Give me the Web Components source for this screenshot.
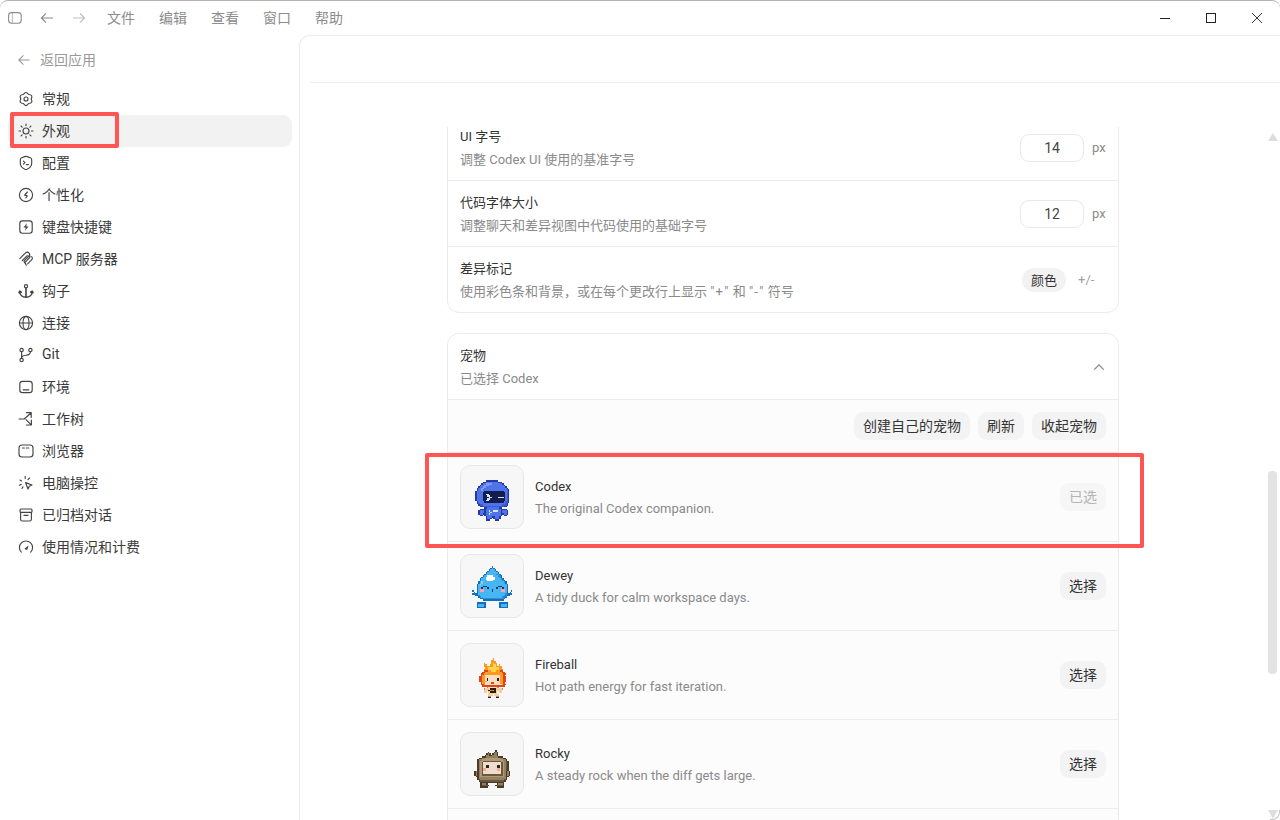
<!DOCTYPE html>
<html lang="zh-CN">
<head>
<meta charset="utf-8">
<title>设置</title>
<style>
  html, body { margin: 0; height: 100%; background: #fff; overflow: hidden; }
  body { font-family: Roboto, "Noto Sans CJK SC", sans-serif; }
  .q { letter-spacing: 1.2px; }
</style>
</head>
<body>
<app-window>
  <title-bar slot="top"></title-bar>
  <side-nav slot="side">
    <nav-item icon="gear">常规</nav-item>
    <nav-item icon="sun" active>外观</nav-item>
    <nav-item icon="shield">配置</nav-item>
    <nav-item icon="persona">个性化</nav-item>
    <nav-item icon="keys">键盘快捷键</nav-item>
    <nav-item icon="mcp">MCP 服务器</nav-item>
    <nav-item icon="hook">钩子</nav-item>
    <nav-item icon="globe">连接</nav-item>
    <nav-item icon="git">Git</nav-item>
    <nav-item icon="env">环境</nav-item>
    <nav-item icon="tree">工作树</nav-item>
    <nav-item icon="browser">浏览器</nav-item>
    <nav-item icon="cursor">电脑操控</nav-item>
    <nav-item icon="archive">已归档对话</nav-item>
    <nav-item icon="gauge">使用情况和计费</nav-item>
  </side-nav>
  <settings-pane slot="main">
    <settings-card class="clipped">
      <setting-row>
        <span slot="title">UI 字号</span>
        <span slot="desc">调整 Codex UI 使用的基准字号</span>
        <num-input slot="control" value="14"></num-input>
      </setting-row>
      <setting-row>
        <span slot="title">代码字体大小</span>
        <span slot="desc">调整聊天和差异视图中代码使用的基础字号</span>
        <num-input slot="control" value="12"></num-input>
      </setting-row>
      <setting-row last>
        <span slot="title">差异标记</span>
        <span slot="desc">使用彩色条和背景，或在每个更改行上显示 <span class="q">"+"</span> 和 <span class="q">"-"</span> 符号</span>
        <diff-toggle slot="control"></diff-toggle>
      </setting-row>
    </settings-card>
    <settings-card class="pets">
      <setting-row>
        <span slot="title">宠物</span>
        <span slot="desc">已选择 Codex</span>
        <svg slot="control" width="12" height="8" viewBox="0 0 12 8" style="display:block;margin-right:1px"><path d="M1.2 6.6 6 1.8l4.8 4.8" fill="none" stroke="#8a8a8a" stroke-width="1.3"/></svg>
      </setting-row>
      <pet-toolbar>
        <pill-button>创建自己的宠物</pill-button>
        <pill-button>刷新</pill-button>
        <pill-button>收起宠物</pill-button>
      </pet-toolbar>
      <pet-row pet="codex" name="Codex" desc="The original Codex companion." selected></pet-row>
      <pet-row pet="dewey" name="Dewey" desc="A tidy duck for calm workspace days."></pet-row>
      <pet-row pet="fireball" name="Fireball" desc="Hot path energy for fast iteration."></pet-row>
      <pet-row pet="rocky" name="Rocky" desc="A steady rock when the diff gets large."></pet-row>
      <div style="height:60px;background:#fcfcfc"></div>
    </settings-card>
  </settings-pane>
  <mark-box slot="over" style="left:10px;top:112px;width:109px;height:36px"></mark-box>
  <mark-box slot="over" style="left:425px;top:453px;width:719px;height:95px"></mark-box>
</app-window>

<script>
const ICONS = {
  gear: '<path d="M5.4 3.5Q8-.6 10.6 3.5Q15.45 3.7 13.2 8Q15.45 12.3 10.6 12.5Q8 16.6 5.4 12.5Q.55 12.3 2.8 8Q.55 3.7 5.4 3.5Z"/><circle cx="8" cy="8" r="2"/>',
  sun: '<circle cx="8" cy="8" r="3"/><path d="M8 1v1.6M8 13.4V15M1 8h1.6M13.4 8H15M3.05 3.05l1.1 1.1M11.85 11.85l1.1 1.1M3.05 12.95l1.1-1.1M11.85 4.15l1.1-1.1"/>',
  shield: '<path d="M6.7 1.6c.8-.3 1.8-.3 2.6 0l3 1.1c.8.3 1.4 1.1 1.4 2v3.4c0 2.9-2.3 5.3-4.7 6.2-.6.2-1.4.2-2 0-2.4-.9-4.7-3.3-4.7-6.2V4.7c0-.9.6-1.7 1.4-2z"/><path d="M5.4 6.2 7 7.7 5.4 9.2M8.4 9.6h2"/>',
  persona: '<circle cx="8" cy="8" r="6.6"/><path d="M9.4 5 6.8 8c-.2.3 0 .5.3.5h1.8c.3 0 .5.3.3.6l-1.4 1.7"/>',
  keys: '<rect x="1.8" y="1.8" width="12.4" height="12.4" rx="2.6"/><path d="M9 4.2 5.4 8.6h2.4l-.8 3.2 3.6-4.4H8.2z" fill="currentColor" stroke="none"/>',
  mcp: '<path d="M1.8 7.6 7.6 1.8c1-1 2.4-1 3.3 0 .9.9.9 2.3 0 3.2L6.4 9.6M4.2 9.6l5-5M6.4 9.6c-.5.6-.5 1.1 0 1.6l1 1 .9 2M13.6 5.6c1 .9 1 2.3 0 3.2l-4 4M11.2 4.2c.9.9.9 2.1 0 3L6.6 11.8"/>',
  hook: '<circle cx="8" cy="3.2" r="1.6"/><path d="M8 4.8v9.4M1.8 8.4c0 3.6 2.8 5.8 6.2 5.8s6.2-2.2 6.2-5.8M1 9.6l.8-1.4 1.4 1M15 9.6l-.8-1.4-1.4 1" stroke-width="1.6"/>',
  globe: '<circle cx="8" cy="8" r="6.6"/><ellipse cx="8" cy="8" rx="3" ry="6.6"/><path d="M1.4 8h13.2"/>',
  git: '<circle cx="3.6" cy="3" r="1.7"/><circle cx="12.4" cy="3" r="1.7"/><circle cx="3.6" cy="13" r="1.7"/><path d="M3.6 4.7v6.6M12.4 4.7c0 2.8-2.3 3.3-4.4 3.5-2.2.2-4.4.6-4.4 3"/>',
  env: '<rect x="1.8" y="2.4" width="12.4" height="11.2" rx="2.6"/><path d="M5.2 10.8h5.6"/>',
  tree: '<path d="M1 8h5.2L13 2M8.4 1.6h4.8v4.8M8 8.6l5 5M13.4 9v5H8.4"/>',
  browser: '<rect x="1" y="2" width="14" height="12" rx="3"/><path d="M4.4 5h2M8.4 5h2.4"/>',
  cursor: '<path d="M7.6 7.6 14 10l-2.8 1.2L10 14z"/><path d="M7.2 1.4v2.2M2 5l1.6 1M1.4 10.2l1.8-.8M4 13.4l1-1.6M11.4 3 10 4.6"/>',
  archive: '<rect x="2" y="2" width="12" height="3.4" rx="1"/><path d="M2.6 5.4v6.8a1.8 1.8 0 0 0 1.8 1.8h7.2a1.8 1.8 0 0 0 1.8-1.8V5.4M6 8.4h4"/>',
  gauge: '<path d="M3.3 13.2a6.6 6.6 0 1 1 9.4 0"/><path d="M6.6 9.6 10.6 6.4 9.4 10.4c-.4.8-2.4.6-2.8-.8z" fill="currentColor" stroke="none"/>'
};

const SPRITES = {
  codex: {
    dy: 7, colors: { k: '#2638a8', b: '#4f74ea', l: '#7d9cf6', d: '#3c5ad2', n: '#131e4e', w: '#cdeaff' },
    rows: [
      '.......kkkkkkkk........',
      '.....kkbbbbbbbbkkk.....',
      '....kbbllllbbbbbbbk....',
      '...kbblllbbbbbbbbbbk...',
      '..kbbllbbbbbbbbbbbbbk..',
      '.kbbllbbbbbbbbbbbbbbbk.',
      '.kbblbbbbbbbbbbbbbbbbdk',
      'kbbbbbnnnnnnnnnnnnnbbdk',
      'kbbbbnnnnnnnnnnnnnnnbdk',
      'kbbbbnnwwnnnnnnnnnnnbdk',
      'kbbbbnnnwwnnnnnnnnnnbdk',
      'kbbbbnnnnwwnnnnwwwwnbdk',
      'kbbbbnnnwwnnnnnnnnnnbdk',
      'kbbbbnnwwnnnnnnnnnnnbdk',
      '.kbbbbnnnnnnnnnnnnnbddk',
      '.kdbbbbbbbbbbbbbbbbbdk.',
      '..kddbbbbbbbbbbbbbdddk.',
      '...kkddddddddddddddkk..',
      '......kkbbbbbbbbkk.....',
      '...kkkkbbbbbbbbbbkkkk..',
      '..kbbbkbbwbbwwwbbkbbbk.',
      '..kbbbkbbbwbbbbbbkbbbk.',
      '..kbbkkbbwbbbbbbbkkbbk.',
      '...kk.kbbbbbbbbbbk.kk..',
      '.......kbbbkkbbbk......',
      '.......kbbk.kbbbk......',
      '.......kkk...kkk.......'
    ]
  },
  dewey: {
    dy: 2, colors: { k: '#1270c2', b: '#48b6f2', l: '#85cff8', w: '#ffffff', d: '#2a8ed8', p: '#f6a3b4', e: '#17345f' },
    rows: [
      '.............k.............',
      '............kbk............',
      '...........kbbbk...........',
      '..........kbbbbbk..........',
      '.........kbbbbbbbk.........',
      '........kbbbbbbbdbk........',
      '.......kbbwwwwbbbddk.......',
      '......kbbwwwwwwbbbdk.......',
      '.....kbbbwwwwwwbbbbdk......',
      '.....kbbbbwwwwbbbbbbdk.....',
      '....kblbbbbbbbbbbbbbbdk....',
      '....kblbbbbbbbbbbbbbbbk....',
      '...kblbbbbbbbbbbbbbbbbbk...',
      '...kbbbeeebbbbbbbeeebbbk...',
      '...kbbebbbebbbbbebbbebbk...',
      '...kbpppbbbbbebbbbbpppbk...',
      'k..kbpppbbbbbebbbbbpppbk..k',
      '.k.kbbbbbbbbbbbbbbbbbbbk.k.',
      'kkkkbbbbbbbbbbbbbbbbbbdkkkk',
      '..kkdbbbbbbbbbbbbbbbbddkk..',
      '....kdbbbbbbbbbbbbbbddk....',
      '.....kkddddddddddddddk.....',
      '.......kkkkkkkkkkkkkk......',
      '...........................',
      '...kkkkkk.........kkkkkk...',
      '...kbbbbk.........kbbbbk...',
      '...kbbbbk.........kbbbbk...',
      '...kkkkkk.........kkkkkk...'
    ]
  },
  fireball: {
    dy: 6, colors: { y: '#ffd54d', o: '#ff9a1e', r: '#e0441a', s: '#f8dfc4', e: '#2a1a10', p: '#f4a08e', f: '#f3cfa6', t: '#c98d5a', c: '#e8701c' },
    rows: [
      '.........o........',
      '........oo........',
      '........ooo.......',
      '...o....oyoo......',
      '...oo..ooyyo.o....',
      '...ooooooyyoooo...',
      '....ooyyyyyyyoo...',
      '...oooyyyyyyyooo..',
      '...rrrooyyyooorr..',
      '..rrooooooooooorr.',
      '.rrooooooooooooorr',
      '.roossssssssssoor.',
      'rroossssssssssoorr',
      'rroosessssssesoorr',
      'rroosessssssesoorr',
      'rroopsssssssspoorr',
      '.roossssrrssssoor.',
      '.rrosssssssssssorr',
      '..rrrrrrrrrrrrrrr.',
      '.....tsssssst.....',
      '...tfffeeeefffft..',
      '...fffeocoeffff...',
      '...ff.feeeef.ff...',
      '......ffffff......',
      '......fff.fff.....',
      '......tt...tt.....',
      '......ee...ee.....'
    ]
  },
  rocky: {
    dy: 10, colors: { k: '#4a3a2a', m: '#94805f', l: '#ad9975', d: '#6a573f', s: '#f0dccb', p: '#f2a9a0', e: '#2a2420' },
    rows: [
      '..............k.........',
      '.........k...kmk........',
      '........kmk.kmmk........',
      '.......kmmkkmmmk........',
      '.....kkkmmmmmmmmkkk.....',
      '...kkmmllllllllllmmkk...',
      '..kmmllllllllllllllmmk..',
      '..kmllddddddddddddllmdk.',
      '..kmldssssssssssssdlmdk.',
      '..kmldssssssssssssdlmdk.',
      '..kmldsseessssseesdlmdk.',
      '..kmldsseessssseesdlmdk.',
      '..kmldppsssssssppsdlmdk.',
      '..kmldppsssssssppsdlmdk.',
      'kmkmldssssssssssssdlmkmk',
      'kmkmldssssssssssssdlmkmk',
      'kmkmlddddddddddddddlmkmk',
      '.kkmllllllllllllllllmkk.',
      '..kmmmmmmmmmmmmmmmmmmk..',
      '..kdmmmmmmmmmmmmmmmmdk..',
      '...kddddddddddddddddk...',
      '....kkkkkkkkkkkkkkkk....',
      '....kmmmk......kmmmk....',
      '....kddddk....kddddk....',
      '....kkkkk......kkkkk....'
    ]
  }
};

class AppWindow extends HTMLElement {
  constructor() {
    super();
    this.attachShadow({ mode: 'open' }).innerHTML = `
<style>
  :host { display: block; position: relative; width: 1280px; height: 820px; box-sizing: border-box;
    border-top: 1px solid #b4b4b4; border-radius: 8px 8px 0 0; overflow: hidden; background: #fff; }
  :host::after { content: ""; position: absolute; right: 0; bottom: 0; width: 9px; height: 9px;
    border-right: 1px solid #c4c4c4; border-bottom: 1px solid #c4c4c4; border-bottom-right-radius: 8px; }
  .body { display: flex; height: 785px; }
  ::slotted([slot=side]) { width: 299px; flex: none; }
  ::slotted([slot=main]) { flex: 1; min-width: 0; }
</style>
<slot name="top"></slot>
<div class="body"><slot name="side"></slot><slot name="main"></slot></div>
<slot name="over"></slot>`;
  }
}
customElements.define('app-window', AppWindow);

class MarkBox extends HTMLElement {
  constructor() {
    super();
    this.attachShadow({ mode: 'open' }).innerHTML = `
<style>
  :host { display: block; position: absolute; box-sizing: border-box; margin-top: -1px;
    border: 4px solid #ff5555; border-radius: 2px; pointer-events: none; }
</style>`;
  }
}
customElements.define('mark-box', MarkBox);

class TitleBar extends HTMLElement {
  constructor() {
    super();
    this.attachShadow({ mode: 'open' }).innerHTML = `
<style>
  :host { display: flex; align-items: center; height: 34px; padding-left: 8px; color: #8c8c8c; font-size: 14px; }
  svg { display: block; flex: none; fill: none; stroke: currentColor; }
  .nav { display: flex; gap: 18px; margin-left: 18px; }
  .menu { display: flex; gap: 24px; margin-left: 21px; padding-bottom: 2px; }
  .menu span { width: 28px; white-space: nowrap; }
  .win { display: flex; margin-left: auto; margin-right: 18px; gap: 36px; color: #222; align-items: center; }
</style>
<svg width="14" height="12" viewBox="0 0 14 12"><rect x=".6" y=".6" width="12.6" height="10.6" rx="3" stroke-width="1.1"/><path d="M4.4 1v10" stroke-width="1" opacity=".6"/></svg>
<div class="nav">
  <svg width="14" height="12" viewBox="0 0 14 12" stroke-width="1.2"><path d="M13 6H1.4M6 1.4 1.4 6 6 10.6"/></svg>
  <svg width="14" height="12" viewBox="0 0 14 12" stroke-width="1.2" opacity=".55"><path d="M1 6h11.6M8 1.4 12.6 6 8 10.6"/></svg>
</div>
<div class="menu"><span>文件</span><span>编辑</span><span>查看</span><span>窗口</span><span>帮助</span></div>
<div class="win">
  <svg width="10" height="10" viewBox="0 0 10 10"><path d="M0 5.5h10" stroke-width="1"/></svg>
  <svg width="10" height="10" viewBox="0 0 10 10"><rect x=".5" y=".5" width="9" height="9" stroke-width="1"/></svg>
  <svg width="10" height="10" viewBox="0 0 10 10"><path d="M0 0l10 10M10 0 0 10" stroke-width=".9"/></svg>
</div>`;
  }
}
customElements.define('title-bar', TitleBar);

class SideNav extends HTMLElement {
  constructor() {
    super();
    this.attachShadow({ mode: 'open' }).innerHTML = `
<style>
  :host { display: block; box-sizing: border-box; padding: 9px 7px 0 8px; }
  .back { display: flex; align-items: center; gap: 8px; height: 32px; padding-left: 10px; margin-bottom: 7px;
    font-size: 14px; color: #9a9a9a; }
  .back span { margin-left: 2px; padding-bottom: 2px; }
  svg { display: block; fill: none; stroke: currentColor; }
</style>
<div class="back"><svg width="12" height="12" viewBox="0 0 12 12" stroke-width="1.1"><path d="M11.6 6H.8M5.4 1.4.8 6l4.6 4.6"/></svg><span>返回应用</span></div>
<slot></slot>`;
  }
}
customElements.define('side-nav', SideNav);

class NavItem extends HTMLElement {
  constructor() {
    super();
    const icon = ICONS[this.getAttribute('icon')] || '';
    this.attachShadow({ mode: 'open' }).innerHTML = `
<style>
  :host { display: flex; align-items: center; gap: 8px; height: 32px; padding-left: 10px; border-radius: 9px;
    font-size: 14px; color: #3a3a3a; }
  :host([active]) { background: #f1f2f1; }
  span { padding-bottom: 2px; }
  svg { display: block; flex: none; fill: none; stroke: #444; stroke-width: 1.15; color: #444;
    stroke-linecap: round; stroke-linejoin: round; }
</style>
<svg width="16" height="16" viewBox="0 0 16 16">${icon}</svg><span><slot></slot></span>`;
  }
}
customElements.define('nav-item', NavItem);

class SettingsPane extends HTMLElement {
  constructor() {
    super();
    this.attachShadow({ mode: 'open' }).innerHTML = `
<style>
  :host { display: flex; flex-direction: column; height: 100%; box-sizing: border-box;
    border-left: 1px solid #ececec; border-top: 1px solid #ececec; border-top-left-radius: 11px; }
  .head { height: 46px; margin-left: 10px; border-bottom: 1px solid #ececec; flex: none; }
  .wrap { display: flex; flex: 1; min-height: 0; margin-top: 44px; }
  .scroll { flex: 1; min-width: 0; overflow: hidden; display: flex; flex-direction: column; align-items: center; }
  ::slotted(settings-card) { flex: none; width: 672px; }
  ::slotted(.clipped) { margin-top: -13px; }
  ::slotted(.pets) { margin-top: 20px; }
</style>
<div class="head"></div>
<div class="wrap">
  <div class="scroll"><slot></slot></div>
  <fake-scrollbar></fake-scrollbar>
</div>`;
  }
}
customElements.define('settings-pane', SettingsPane);

class FakeScrollbar extends HTMLElement {
  constructor() {
    super();
    this.attachShadow({ mode: 'open' }).innerHTML = `
<style>
  :host { display: flex; flex-direction: column; align-items: flex-start; width: 14px; flex: none;
    box-sizing: border-box; padding: 6px 0 1px 2px; }
  .up, .down { width: 0; height: 0; border-left: 5px solid transparent; border-right: 5px solid transparent; }
  .up { border-bottom: 8px solid #dedede; }
  .down { border-top: 9px solid #dedede; margin-top: auto; }
  .thumb { width: 9px; height: 203px; margin-top: 330px; border-radius: 4px; background: #e3e3e3; }
</style>
<div class="up"></div><div class="thumb"></div><div class="down"></div>`;
  }
}
customElements.define('fake-scrollbar', FakeScrollbar);

class SettingsCard extends HTMLElement {
  constructor() {
    super();
    this.attachShadow({ mode: 'open' }).innerHTML = `
<style>
  :host { display: block; box-sizing: border-box; border: 1px solid #ebebeb; border-radius: 12px; background: #fff; overflow: hidden; }
</style>
<slot></slot>`;
  }
}
customElements.define('settings-card', SettingsCard);

class SettingRow extends HTMLElement {
  constructor() {
    super();
    this.attachShadow({ mode: 'open' }).innerHTML = `
<style>
  :host { display: flex; align-items: center; justify-content: space-between; box-sizing: border-box;
    height: 66px; padding: 0 12px; border-bottom: 1px solid #ebebeb; }
  :host([last]) { height: 65px; border-bottom: 0; }
  .text { display: flex; flex-direction: column; gap: 3px; padding-top: 2px; font-size: 13px; line-height: 20px; white-space: nowrap; }
  .t { color: #333; }
  .d { color: #8a8a8a; }
</style>
<div class="text"><div class="t"><slot name="title"></slot></div><div class="d"><slot name="desc"></slot></div></div>
<slot name="control"></slot>`;
  }
}
customElements.define('setting-row', SettingRow);

class NumInput extends HTMLElement {
  constructor() {
    super();
    this.attachShadow({ mode: 'open' }).innerHTML = `
<style>
  :host { display: flex; align-items: center; gap: 8px; font-size: 13px; color: #8a8a8a; }
  .box { box-sizing: border-box; width: 64px; height: 28px; border: 1px solid #e8e8e8; border-radius: 9px;
    display: flex; align-items: center; justify-content: center; font-size: 14px; color: #444; }
  .unit { width: 14px; }
</style>
<div class="box">${this.getAttribute('value')}</div><span class="unit">px</span>`;
  }
}
customElements.define('num-input', NumInput);

class DiffToggle extends HTMLElement {
  constructor() {
    super();
    this.attachShadow({ mode: 'open' }).innerHTML = `
<style>
  :host { display: flex; align-items: center; font-size: 13px; }
  .on { height: 24px; width: 44px; border-radius: 12px; background: #f2f2f2; color: #333;
    display: flex; align-items: center; justify-content: center; }
  .off { margin-left: 12px; margin-right: 10px; color: #a0a0a0; width: 18px; white-space: nowrap; }
</style>
<div class="on">颜色</div><div class="off">+/-</div>`;
  }
}
customElements.define('diff-toggle', DiffToggle);

class PillButton extends HTMLElement {
  constructor() {
    super();
    this.attachShadow({ mode: 'open' }).innerHTML = `
<style>
  :host { display: inline-flex; align-items: center; box-sizing: border-box; height: 28px; padding: 0 9px 2px; border-radius: 9px;
    background: #f3f3f3; color: #333; font-size: 14px; white-space: nowrap; }
  :host([disabled]) { background: #f6f6f6; color: #b4b4b4; }
</style>
<slot></slot>`;
  }
}
customElements.define('pill-button', PillButton);

class PetToolbar extends HTMLElement {
  constructor() {
    super();
    this.attachShadow({ mode: 'open' }).innerHTML = `
<style>
  :host { display: flex; justify-content: flex-end; gap: 8px; box-sizing: border-box; height: 53px; padding: 12px;
    background: #fcfcfc; border-bottom: 1px solid #ebebeb; }
</style>
<slot></slot>`;
  }
}
customElements.define('pet-toolbar', PetToolbar);

class PetSprite extends HTMLElement {
  constructor() {
    super();
    const sprite = SPRITES[this.getAttribute('pet')];
    let rects = '';
    sprite.rows.forEach((row, y) => {
      [...row].forEach((c, x) => {
        if (sprite.colors[c]) rects += `<rect x="${x}" y="${y}" width="1" height="1" fill="${sprite.colors[c]}"/>`;
      });
    });
    const cols = Math.max(...sprite.rows.map(r => r.length));
    const h = sprite.rows.length;
    this.attachShadow({ mode: 'open' }).innerHTML = `
<style>
  :host { display: flex; align-items: center; justify-content: center; box-sizing: border-box; flex: none;
    width: 64px; height: 64px; padding-top: ${sprite.dy}px; border: 1px solid #e7e7e7; border-radius: 10px; background: #f7f7f7; }
  svg { display: block; shape-rendering: crispEdges; }
</style>
<svg width="${cols * 1.5}" height="${h * 1.5}" viewBox="0 0 ${cols} ${h}">${rects}</svg>`;
  }
}
customElements.define('pet-sprite', PetSprite);

class PetRow extends HTMLElement {
  constructor() {
    super();
    const selected = this.hasAttribute('selected');
    this.attachShadow({ mode: 'open' }).innerHTML = `
<style>
  :host { display: flex; align-items: center; gap: 11px; box-sizing: border-box; height: 89px; padding: 0 12px;
    background: #fcfcfc; border-bottom: 1px solid #ebebeb; }
  .text { flex: 1; display: flex; flex-direction: column; gap: 2px; padding-top: 2px; font-size: 13px; line-height: 20px; white-space: nowrap; }
  .n { color: #333; }
  .d { color: #8a8a8a; }
</style>
<pet-sprite pet="${this.getAttribute('pet')}"></pet-sprite>
<div class="text"><div class="n">${this.getAttribute('name')}</div><div class="d">${this.getAttribute('desc')}</div></div>
<pill-button ${selected ? 'disabled' : ''}>${selected ? '已选' : '选择'}</pill-button>`;
  }
}
customElements.define('pet-row', PetRow);
</script>
</body>
</html>
